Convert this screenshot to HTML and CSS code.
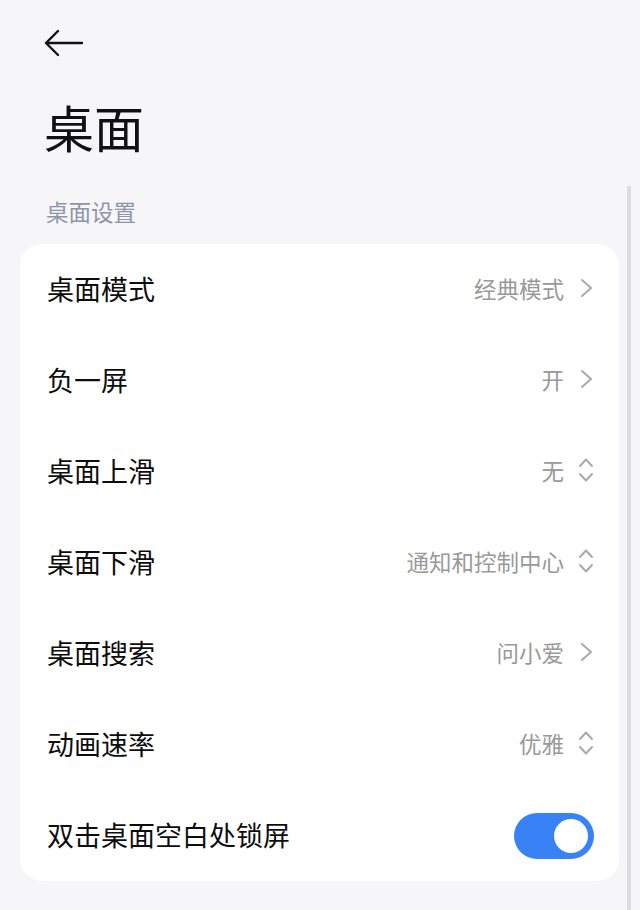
FILE: index.html
```html
<!DOCTYPE html>
<html lang="zh-CN">
<head>
    <meta charset="UTF-8">
    <meta name="viewport" content="width=device-width, initial-scale=1.0">
    <title>桌面</title>
    <link rel="stylesheet" href="styles.css">
</head>
<body>

    <!-- Top bar with back arrow -->
    <div class="top-bar">
        <svg class="back-icon" width="40" height="28" viewBox="0 0 40 28">
            <path d="M2 14 H38 M14 2 L2 14 L14 26" fill="none" stroke="#111" stroke-width="2.4" stroke-linecap="round" stroke-linejoin="round"/>
        </svg>
    </div>

    <h1 class="page-title">桌面</h1>

    <div class="section-label">桌面设置</div>

    <!-- Settings list -->
    <div class="card">
        <div class="row">
            <span class="row-label">桌面模式</span>
            <span class="row-value">经典模式
                <svg class="chevron" width="16" height="20" viewBox="0 0 16 20"><path d="M4 2 L13 10 L4 18" fill="none" stroke="#aaa" stroke-width="2" stroke-linecap="round" stroke-linejoin="round"/></svg>
            </span>
        </div>
        <div class="row">
            <span class="row-label">负一屏</span>
            <span class="row-value">开
                <svg class="chevron" width="16" height="20" viewBox="0 0 16 20"><path d="M4 2 L13 10 L4 18" fill="none" stroke="#aaa" stroke-width="2" stroke-linecap="round" stroke-linejoin="round"/></svg>
            </span>
        </div>
        <div class="row">
            <span class="row-label">桌面上滑</span>
            <span class="row-value">无
                <svg class="chevron" width="16" height="28" viewBox="0 0 16 28"><path d="M2 10 L8 3.5 L14 10 M2 18 L8 24.5 L14 18" fill="none" stroke="#aaa" stroke-width="2" stroke-linecap="round" stroke-linejoin="round"/></svg>
            </span>
        </div>
        <div class="row">
            <span class="row-label">桌面下滑</span>
            <span class="row-value">通知和控制中心
                <svg class="chevron" width="16" height="28" viewBox="0 0 16 28"><path d="M2 10 L8 3.5 L14 10 M2 18 L8 24.5 L14 18" fill="none" stroke="#aaa" stroke-width="2" stroke-linecap="round" stroke-linejoin="round"/></svg>
            </span>
        </div>
        <div class="row">
            <span class="row-label">桌面搜索</span>
            <span class="row-value">问小爱
                <svg class="chevron" width="16" height="20" viewBox="0 0 16 20"><path d="M4 2 L13 10 L4 18" fill="none" stroke="#aaa" stroke-width="2" stroke-linecap="round" stroke-linejoin="round"/></svg>
            </span>
        </div>
        <div class="row">
            <span class="row-label">动画速率</span>
            <span class="row-value">优雅
                <svg class="chevron" width="16" height="28" viewBox="0 0 16 28"><path d="M2 10 L8 3.5 L14 10 M2 18 L8 24.5 L14 18" fill="none" stroke="#aaa" stroke-width="2" stroke-linecap="round" stroke-linejoin="round"/></svg>
            </span>
        </div>
        <div class="row">
            <span class="row-label">双击桌面空白处锁屏</span>
            <span class="toggle on"><span class="knob"></span></span>
        </div>
    </div>

    <!-- Scroll indicator -->
    <div class="scrollbar"></div>

</body>
</html>
```

FILE: styles.css
```css
/* Page */
body {
    margin: 0;
    background-color: #f6f6f8;
    color: #111;
    font-family: "Noto Sans CJK SC", "Noto Sans", sans-serif;
    height: 910px;
    overflow: hidden;
}

/* Top bar */
.top-bar {
    padding: 29px 0 0 44px;
    height: 28px;
}

.back-icon {
    display: block;
}

/* Title */
.page-title {
    margin: 43px 0 0 44px;
    font-size: 50px;
    font-weight: 400;
    line-height: 52px;
}

.section-label {
    margin: 47px 0 0 46px;
    font-size: 22.5px;
    line-height: 24px;
    color: #8e95a8;
}

/* Card with rows */
.card {
    margin: 21px 21px 0 20px;
    background-color: white;
    border-radius: 22px;
}

.row {
    height: 91px;
    display: flex;
    align-items: center;
    justify-content: space-between;
    padding: 0 25px 0 27px;
}

.row-label {
    font-size: 27px;
    font-weight: 400;
    color: #0d0d0d;
    margin-top: -3px;
}

.row-value {
    display: flex;
    align-items: center;
    gap: 14px;
    font-size: 22.5px;
    color: #999;
    margin-top: -3px;
}

.chevron {
    display: block;
}

/* Switch */
.toggle {
    width: 80px;
    height: 46px;
    border-radius: 23px;
    background-color: #3783f5;
    display: flex;
    align-items: center;
    justify-content: flex-end;
    padding-right: 6px;
    box-sizing: border-box;
}

.knob {
    width: 34px;
    height: 34px;
    border-radius: 50%;
    background-color: white;
}

/* Scroll indicator on the right edge */
.scrollbar {
    position: absolute;
    top: 186px;
    left: 627px;
    width: 4px;
    height: 724px;
    background-color: #dcdcdc;
}
```
